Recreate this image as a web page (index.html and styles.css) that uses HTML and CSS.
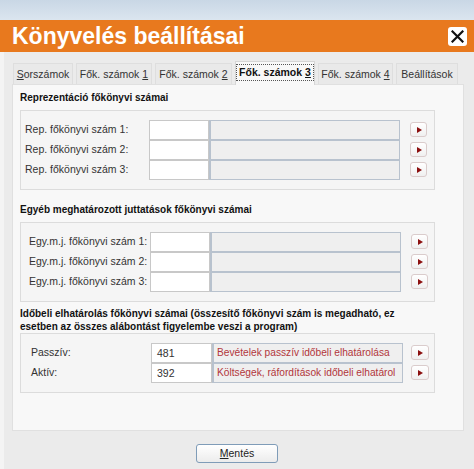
FILE: index.html
```html
<!DOCTYPE html>
<html lang="hu">
<head>
<meta charset="utf-8">
<title>Könyvelés beállításai</title>
<link rel="stylesheet" href="styles.css">
</head>
<body>
<div class="window">
  <div class="topstrip"></div>
  <div class="titlebar">
    <span class="title">Könyvelés beállításai</span>
    <span class="close"><svg width="13" height="13" viewBox="0 0 13 13"><path d="M1.5 1.5 L11.5 11.5 M11.5 1.5 L1.5 11.5" stroke="#111" stroke-width="2.2" stroke-linecap="square"/></svg></span>
  </div>
  <div class="body">
    <div class="tabs">
      <div class="tab t1"><u>S</u>orszámok</div>
      <div class="tab t2">Fők. számok <u>1</u></div>
      <div class="tab t3">Fők. számok <u>2</u></div>
      <div class="tab t4 active"><span class="focus">Fők. számok <u>3</u></span></div>
      <div class="tab t5">Fők. számok <u>4</u></div>
      <div class="tab t6">Beállítások</div>
    </div>
    <div class="panel">
      <div class="heading h1">Reprezentáció főkönyvi számai</div>
      <div class="box b1">
        <div class="row"><span class="label">Rep. főkönyvi szám 1:</span><span class="code"></span><span class="name"></span><span class="arrow"></span></div>
        <div class="row"><span class="label">Rep. főkönyvi szám 2:</span><span class="code"></span><span class="name"></span><span class="arrow"></span></div>
        <div class="row"><span class="label">Rep. főkönyvi szám 3:</span><span class="code"></span><span class="name"></span><span class="arrow"></span></div>
      </div>
      <div class="heading h2">Egyéb meghatározott juttatások főkönyvi számai</div>
      <div class="box b2">
        <div class="row"><span class="label">Egy.m.j. főkönyvi szám 1:</span><span class="code"></span><span class="name"></span><span class="arrow"></span></div>
        <div class="row"><span class="label">Egy.m.j. főkönyvi szám 2:</span><span class="code"></span><span class="name"></span><span class="arrow"></span></div>
        <div class="row"><span class="label">Egy.m.j. főkönyvi szám 3:</span><span class="code"></span><span class="name"></span><span class="arrow"></span></div>
      </div>
      <div class="heading h3">Időbeli elhatárolás főkönyvi számai (összesítő főkönyvi szám is megadható, ez<br>esetben az összes alábontást figyelembe veszi a program)</div>
      <div class="box b3">
        <div class="row"><span class="label">Passzív:</span><span class="code">481</span><span class="name">Bevételek passzív időbeli elhatárolása</span><span class="arrow"></span></div>
        <div class="row"><span class="label">Aktív:</span><span class="code">392</span><span class="name">Költségek, ráfordítások időbeli elhatárol</span><span class="arrow"></span></div>
      </div>
    </div>
    <div class="footer">
      <button class="save"><u>M</u>entés</button>
    </div>
  </div>
</div>
</body>
</html>
```
FILE: styles.css
```css
* { box-sizing: border-box; }
html, body { margin: 0; padding: 0; }
body {
  width: 474px;
  height: 469px;
  overflow: hidden;
  background: #ebebeb;
  font-family: "Liberation Sans", Arial, sans-serif;
  font-size: 10.5px;
  color: #222;
}
.window { width: 474px; height: 469px; }
.topstrip {
  height: 20px;
  background: linear-gradient(to bottom, #c9d7e5, #dbe5ef);
}
.titlebar {
  height: 32px;
  background: #e8791e;
  display: flex;
  align-items: center;
  justify-content: space-between;
  padding: 0 7px 0 12px;
}
.title {
  color: #fff;
  font-weight: bold;
  font-size: 23px;
  line-height: 32px;
}
.close {
  width: 19px;
  height: 19px;
  background: #fff;
  border-radius: 3px;
  display: flex;
  align-items: center;
  justify-content: center;
}
.body {
  height: 417px;
  border-left: 4px solid #f4f4f4;
  padding: 9px 10px 0 8px;
}
.tabs {
  display: flex;
  align-items: flex-end;
  height: 23px;
  padding-left: 1px;
}
.tab {
  height: 21px;
  line-height: 20px;
  margin-right: 3px;
  background: #e9e9e9;
  border: 1px solid #dedede;
  border-bottom: none;
  color: #333;
  text-align: center;
  white-space: nowrap;
}
.t1 { width: 60px; }
.t2 { width: 76px; }
.t3 { width: 77px; }
.t4 { width: 80px; }
.t5 { width: 75px; }
.t6 { width: 62px; margin-right: 0; }
.tab.active {
  height: 24px;
  background: #f8f8f8;
  border-color: #d6d6d6;
  position: relative;
  z-index: 1;
  margin-bottom: -1px;
  font-weight: bold;
  color: #111;
  padding-top: 2px;
  line-height: 16px;
}
.focus {
  display: inline-block;
  border: 1px dotted #555;
  padding: 0 2px;
  line-height: 15px;
}
.panel {
  height: 347px;
  width: 452px;
  background: #f8f8f8;
  border: 1px solid #e0e0e0;
  padding: 6px 0 0 7px;
}
.heading {
  font-weight: bold;
  font-size: 10px;
  line-height: 13px;
  color: #111;
}
.h1 { margin-bottom: 6px; }
.h2 { margin-top: 13px; margin-bottom: 6px; }
.h3 { margin-top: 5px; margin-bottom: 0; }
.box {
  width: 415px;
  background: #f5f5f5;
  border: 1px solid #dcdcdc;
  padding: 9px 0 9px 4px;
}
.row {
  display: flex;
  align-items: flex-start;
  height: 20px;
}
.label {
  width: 124px;
  line-height: 19px;
  color: #333;
}
.b2 { padding-left: 8px; }
.b2 .label { width: 121px; }
.b3 { padding-left: 10px; }
.b3 .label { width: 120px; }
.code {
  width: 60px;
  height: 20px;
  background: #fff;
  border: 1px solid #c8c8c8;
  padding-left: 5px;
  line-height: 18px;
  color: #333;
}
.b3 .code { width: 61px; }
.name {
  width: 191px;
  height: 20px;
  background: #efefef;
  border: 1px solid #b8c2ce;
  border-left-width: 2px;
  padding-left: 3px;
  line-height: 18px;
  font-size: 10.2px;
  color: #b2363b;
  overflow: hidden;
  white-space: nowrap;
}
.arrow {
  width: 17px;
  height: 15px;
  margin-left: 10px;
  margin-top: 2px;
  border: 1px solid #dacccc;
  border-radius: 3px;
  background: linear-gradient(to bottom, #ffffff, #f0f0f0);
  display: flex;
  align-items: center;
  justify-content: center;
}
.arrow::before {
  content: "";
  width: 0;
  height: 0;
  border-top: 3.5px solid transparent;
  border-bottom: 3.5px solid transparent;
  border-left: 5px solid #8c1010;
  margin-left: 1px;
}
.b3 .arrow { margin-left: 8px; width: 18px; }
.footer {
  display: flex;
  justify-content: center;
  padding-top: 13px;
  padding-right: 2px;
}
.save {
  width: 82px;
  height: 19px;
  border: 1px solid #7f9cb8;
  border-radius: 3px;
  background: linear-gradient(to bottom, #ffffff, #ececec);
  font-family: "Liberation Sans", Arial, sans-serif;
  font-size: 10.5px;
  color: #222;
  padding: 0;
  line-height: 17px;
}
```
